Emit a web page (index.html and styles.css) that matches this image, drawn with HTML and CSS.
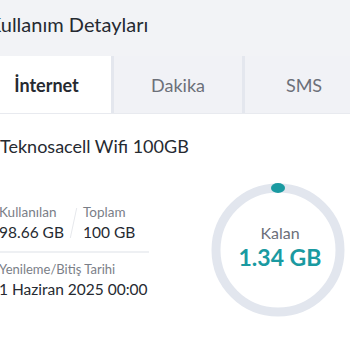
FILE: index.html
```html
<html>
<head>
  <title>Kullanım Detayları</title>
  <link rel="stylesheet" href="styles.css">
</head>
<body>
  <div class="page-head">
    <h2 class="page-title">Kullanım Detayları</h2>
  </div>

  <div class="tabs">
    <div class="tab active">İnternet</div>
    <div class="tab">Dakika</div>
    <div class="tab">SMS</div>
  </div>

  <div class="panel">
    <div class="pack-name">Teknosacell Wifi 100GB</div>

    <div class="usage">
      <div class="usage-info">
        <div class="amounts">
          <div class="amount">
            <div class="label">Kullanılan</div>
            <div class="value">98.66 GB</div>
          </div>
          <div class="slash"></div>
          <div class="amount">
            <div class="label">Toplam</div>
            <div class="value">100 GB</div>
          </div>
        </div>
        <div class="renew">
          <div class="label">Yenileme/Bitiş Tarihi</div>
          <div class="value">1 Haziran 2025 00:00</div>
        </div>
      </div>

      <div class="ring">
        <svg width="140" height="140" viewBox="0 0 140 140">
          <circle cx="70" cy="70" r="62" fill="none" stroke="#e2e6ee" stroke-width="9"/>
          <ellipse cx="70" cy="8" rx="7" ry="5" fill="#1a9aa1"/>
        </svg>
        <div class="ring-text">
          <div class="ring-label">Kalan</div>
          <div class="ring-value">1.34 GB</div>
        </div>
      </div>
    </div>
  </div>
</body>
</html>
```

FILE: styles.css
```css
body {
  margin: 0;
  padding: 0;
  background: #f2f3f6;
  font-family: "Lato", "Open Sans", sans-serif;
  color: #262a31;
  height: 350px;
  overflow: hidden;
}
.page-head {
  height: 56px;
  overflow: hidden;
}
.page-title {
  margin: 0 0 0 -12px;
  padding-top: 11px;
  font-size: 20px;
  font-weight: 400;
  line-height: 26px;
  white-space: nowrap;
}
.tabs {
  display: flex;
  width: 381px;
  height: 57px;
  margin-left: -18px;
  border-bottom: 1px solid #e8eaef;
}
.tab {
  display: flex;
  align-items: center;
  justify-content: center;
  font-size: 18px;
  color: #6c7079;
  background: #f1f2f6;
}
.tab.active {
  width: 129px;
  background: #fff;
  color: #262a31;
  font-weight: 700;
}
.tab:nth-child(2) {
  width: 128px;
  border-left: 3px solid #e4e7ee;
}
.tab:nth-child(3) {
  flex: 1;
  border-left: 3px solid #e4e7ee;
}
.panel {
  background: #fff;
  height: 240px;
}
.pack-name {
  padding-top: 20px;
  font-size: 18px;
  line-height: 24px;
  margin-left: 0;
}
.usage {
  display: flex;
  margin-top: 22px;
}
.usage-info {
  width: 150px;
  padding-top: 24px;
  margin-left: -1px;
}
.amounts {
  display: flex;
  padding-bottom: 8px;
  border-bottom: 2px solid #eef0f3;
}
.label {
  font-size: 13.5px;
  color: #7a7e87;
  line-height: 17px;
  white-space: nowrap;
}
.renew .label {
  font-size: 13px;
}
.value {
  font-size: 15.5px;
  line-height: 22px;
  white-space: nowrap;
}
.slash {
  width: 1px;
  height: 30px;
  margin: 4px 9px 0 9px;
  background: #e6e8ec;
  transform: skewX(-12deg);
}
.renew {
  padding-top: 8px;
}
.ring {
  position: relative;
  flex: none;
  width: 140px;
  height: 140px;
  margin-left: 59px;
}
.ring-text {
  position: absolute;
  inset: 0;
  display: flex;
  flex-direction: column;
  align-items: center;
  justify-content: center;
  padding-left: 4px;
}
.ring-label {
  font-size: 16px;
  color: #6c7079;
  margin-top: -6px;
}
.ring-value {
  font-size: 23px;
  font-weight: 700;
  color: #1a9aa1;
  margin-top: 1px;
}
```
